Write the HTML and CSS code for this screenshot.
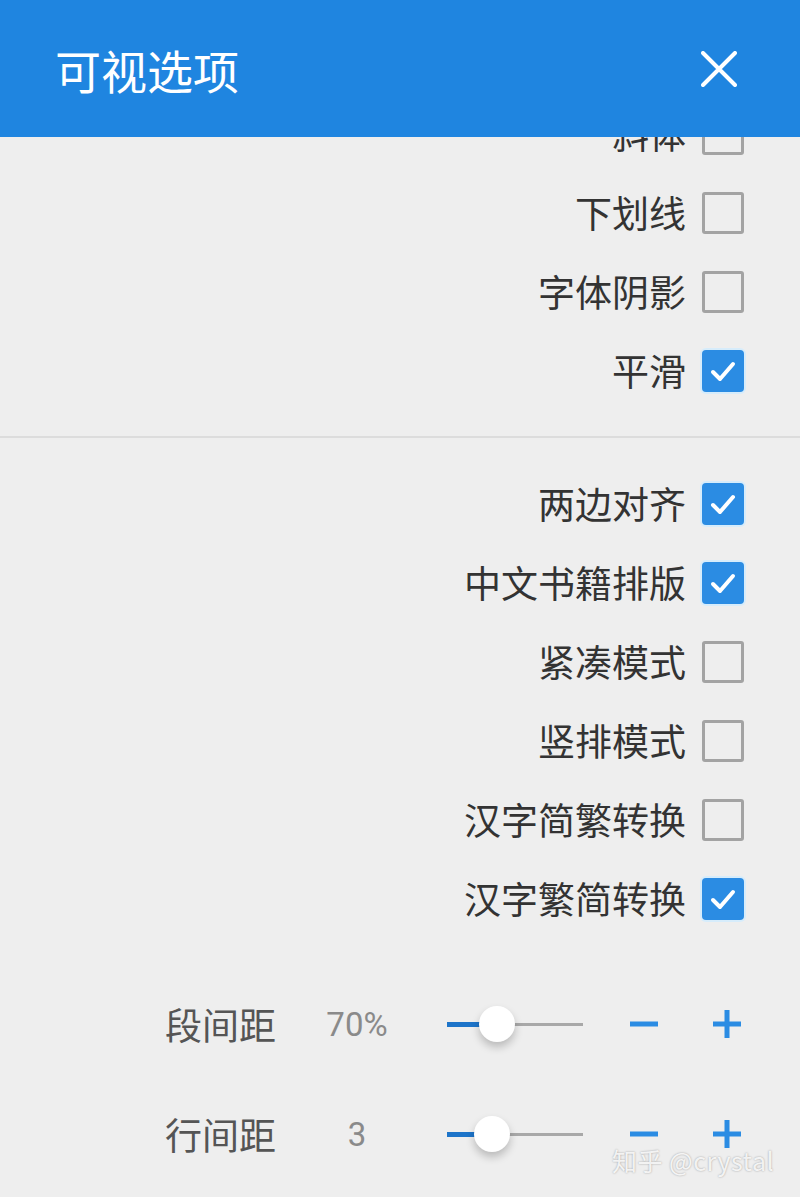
FILE: index.html
```html
<!DOCTYPE html>
<html lang="zh">
<head>
<meta charset="utf-8">
<title>可视选项</title>
<link rel="stylesheet" href="styles.css">
</head>
<body>
<div class="screen">
  <header class="bar">
    <h1 class="title">可视选项</h1>
    <svg class="close" viewBox="0 0 36 36" width="36" height="36"><path d="M2 2 L34 34 M34 2 L2 34" stroke="#fff" stroke-width="4" stroke-linecap="round" fill="none"/></svg>
  </header>
  <main class="content">
    <section class="group first">
      <div class="row"><span class="label">斜体</span><span class="box"></span></div>
      <div class="row"><span class="label">下划线</span><span class="box"></span></div>
      <div class="row"><span class="label">字体阴影</span><span class="box"></span></div>
      <div class="row"><span class="label">平滑</span><span class="box on"><svg viewBox="0 0 40 40" width="40" height="40"><path d="M10 21 L17 28 L30 13" stroke="#fff" stroke-width="4" fill="none" stroke-linecap="round" stroke-linejoin="round"/></svg></span></div>
    </section>
    <hr class="divider">
    <section class="group">
      <div class="row"><span class="label">两边对齐</span><span class="box on"><svg viewBox="0 0 40 40" width="40" height="40"><path d="M10 21 L17 28 L30 13" stroke="#fff" stroke-width="4" fill="none" stroke-linecap="round" stroke-linejoin="round"/></svg></span></div>
      <div class="row"><span class="label">中文书籍排版</span><span class="box on"><svg viewBox="0 0 40 40" width="40" height="40"><path d="M10 21 L17 28 L30 13" stroke="#fff" stroke-width="4" fill="none" stroke-linecap="round" stroke-linejoin="round"/></svg></span></div>
      <div class="row"><span class="label">紧凑模式</span><span class="box"></span></div>
      <div class="row"><span class="label">竖排模式</span><span class="box"></span></div>
      <div class="row"><span class="label">汉字简繁转换</span><span class="box"></span></div>
      <div class="row"><span class="label">汉字繁简转换</span><span class="box on"><svg viewBox="0 0 40 40" width="40" height="40"><path d="M10 21 L17 28 L30 13" stroke="#fff" stroke-width="4" fill="none" stroke-linecap="round" stroke-linejoin="round"/></svg></span></div>
    </section>
    <section class="sliders">
      <div class="srow">
        <span class="slabel">段间距</span>
        <span class="sval">70%</span>
        <span class="track"><span class="fill" style="width:35px"></span><span class="thumb" style="left:35px"></span></span>
        <svg class="btn minus" viewBox="0 0 28 28" width="28" height="28"><rect x="0" y="11.5" width="28" height="5" fill="#2b8ce3"/></svg>
        <svg class="btn plus" viewBox="0 0 28 28" width="28" height="28"><rect x="0" y="11.5" width="28" height="5" fill="#2b8ce3"/><rect x="11.5" y="0" width="5" height="28" fill="#2b8ce3"/></svg>
      </div>
      <div class="srow">
        <span class="slabel">行间距</span>
        <span class="sval">3</span>
        <span class="track"><span class="fill" style="width:30px"></span><span class="thumb" style="left:30px"></span></span>
        <svg class="btn minus" viewBox="0 0 28 28" width="28" height="28"><rect x="0" y="11.5" width="28" height="5" fill="#2b8ce3"/></svg>
        <svg class="btn plus" viewBox="0 0 28 28" width="28" height="28"><rect x="0" y="11.5" width="28" height="5" fill="#2b8ce3"/><rect x="11.5" y="0" width="5" height="28" fill="#2b8ce3"/></svg>
      </div>
    </section>
  </main>
  <div class="watermark">知乎 @crystal</div>
</div>
</body>
</html>
```
FILE: styles.css
```css
* { box-sizing: border-box; }
html, body { margin: 0; padding: 0; }
body {
  background: #eeeeee;
  font-family: "Noto Sans CJK SC", "Noto Sans", sans-serif;
}
.screen {
  position: relative;
  width: 800px;
  height: 1197px;
  overflow: hidden;
  background: #eeeeee;
}
.bar {
  position: relative;
  z-index: 2;
  height: 137px;
  background: #1f85e0;
  display: flex;
  align-items: center;
  justify-content: space-between;
  padding: 0 63px 0 55px;
}
.title {
  margin: 0;
  font-weight: 400;
  font-size: 46px;
  line-height: 1;
  color: #fff;
}
.close { display: block; }
.content {
  overflow: hidden;
  height: 1060px;
}
.group.first { margin-top: -43px; }
.row {
  height: 79px;
  display: flex;
  align-items: center;
  justify-content: flex-end;
  gap: 16px;
  padding-right: 56px;
}
.label {
  font-size: 37px;
  line-height: 1;
  color: #333;
}
.box {
  width: 42px;
  height: 42px;
  border: 3px solid #a3a3a3;
  border-radius: 3px;
  display: flex;
  align-items: center;
  justify-content: center;
}
.box.on {
  border: none;
  background: #2b8ce3;
  border-radius: 4px;
  box-shadow: 0 0 0 2px #d6ecfb;
}
.box svg { display: block; }
.divider {
  margin: 26px 0 26px;
  border: 0;
  height: 2px;
  background: #dcdcdc;
}
.sliders { margin-top: 31px; }
.srow {
  height: 110px;
  display: flex;
  align-items: center;
  padding-left: 165px;
}
.slabel {
  width: 152px;
  font-size: 37px;
  line-height: 1;
  color: #555;
}
.sval {
  width: 80px;
  text-align: center;
  font-family: Roboto, "Noto Sans", sans-serif;
  font-size: 33px;
  color: #8a8a8a;
}
.track {
  position: relative;
  margin-left: 50px;
  width: 136px;
  height: 3px;
  background: #a8a8a8;
}
.fill {
  position: absolute;
  left: 0;
  top: -1px;
  height: 5px;
  background: #1d74c9;
}
.thumb {
  position: absolute;
  top: -17px;
  width: 36px;
  height: 36px;
  margin-left: -3px;
  border-radius: 50%;
  background: #fff;
  box-shadow: 0 5px 8px rgba(0,0,0,0.22);
}
.btn { display: block; }
.minus { margin-left: 47px; }
.plus { margin-left: 55px; }
.watermark {
  position: absolute;
  left: 612px;
  top: 1142px;
  font-size: 25px;
  color: rgba(255,255,255,0.85);
  text-shadow: 0 0 2px rgba(0,0,0,0.35);
  letter-spacing: 0.5px;
}
```
